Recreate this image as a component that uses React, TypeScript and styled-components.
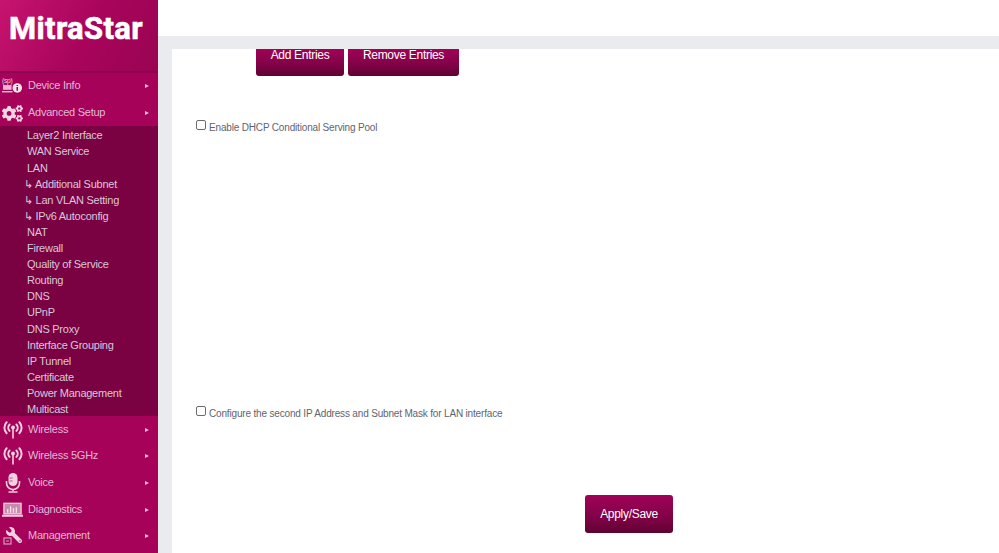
import React from 'react';
import styled, { createGlobalStyle } from 'styled-components';
import { FaCogs, FaWrench } from 'react-icons/fa';

const GlobalStyle = createGlobalStyle`
  html, body {
    margin: 0;
    padding: 0;
    background: #fff;
    font-family: "Liberation Sans", Arial, sans-serif;
    overflow: hidden;
  }
`;

const Page = styled.div`
  display: grid;
  grid-template-columns: 158px 1fr;
  width: 999px;
  height: 553px;
  overflow: hidden;
`;

const Sidebar = styled.aside`
  display: flex;
  flex-direction: column;
  background: #a6025a;
  overflow: hidden;
`;

const LogoBar = styled.div`
  height: 73px;
  flex: none;
  box-sizing: border-box;
  padding: 9px 0 0 9px;
  background: linear-gradient(120deg, #c6146f 0%, #a8045b 55%, #9a0453 100%);
  border-bottom: 2px solid #8f0350;
`;

const LogoText = styled.div`
  color: #fff;
  font-family: Roboto, sans-serif;
  font-weight: 700;
  font-size: 31px;
  line-height: 40px;
  letter-spacing: 0.35px;
  -webkit-text-stroke: 0.6px #fff;
`;

const MenuRow = styled.div`
  display: flex;
  align-items: center;
  height: 26.7px;
  flex: none;
  padding: 0 9px 0 2px;
  color: #e2b8d6;
  font-size: 11px;
  letter-spacing: -0.25px;
`;

const IconSlot = styled.span`
  width: 21px;
  margin-right: 5px;
  flex: none;
  display: flex;
  justify-content: center;
  align-items: center;
`;

const MenuLabel = styled.span`
  flex: 1;
  position: relative;
  top: -1px;
`;

const Arrow = styled.span`
  width: 0;
  height: 0;
  border-left: 4px solid #e6bcd8;
  border-top: 2.5px solid transparent;
  border-bottom: 2.5px solid transparent;
`;

const SubMenu = styled.div`
  display: flex;
  flex-direction: column;
  flex: none;
  padding: 1px 0 0;
  height: 290px;
  background: #7a0242;
  box-sizing: border-box;
`;

const SubItem = styled.div<{ $nested?: boolean }>`
  height: 16.1px;
  line-height: 16.1px;
  flex: none;
  padding-left: ${p => (p.$nested ? '24px' : '27px')};
  color: #d9c6da;
  font-size: 11px;
  letter-spacing: -0.25px;
  white-space: nowrap;
`;

const Main = styled.main`
  display: flex;
  flex-direction: column;
  min-width: 0;
`;

const TopBar = styled.div`
  height: 36px;
  flex: none;
  background: #fff;
`;

const Frame = styled.div`
  flex: 1;
  display: flex;
  background: #e9ebef;
  padding: 13px 0 0 14px;
  min-height: 0;
`;

const Panel = styled.div`
  flex: 1;
  display: flex;
  flex-direction: column;
  background: #fff;
`;

const ButtonRow = styled.div`
  display: flex;
  gap: 4px;
  padding-left: 84px;
`;

const ClippedButton = styled.button<{ $w: number }>`
  width: ${p => p.$w}px;
  height: 27px;
  border: 0;
  padding: 0 0 15px;
  border-radius: 0 0 3px 3px;
  background: linear-gradient(180deg, #a00258 0%, #7d0244 65%, #5e0232 100%);
  color: #fff;
  font-family: "Liberation Sans", Arial, sans-serif;
  font-size: 12px;
  letter-spacing: -0.3px;
  line-height: 12px;
`;

const CheckRow = styled.label<{ $top: number }>`
  display: flex;
  align-items: flex-start;
  gap: 3px;
  margin: ${p => p.$top}px 0 0 24px;
  color: #5f6470;
  font-size: 10px;
  letter-spacing: -0.17px;
  line-height: 13px;
`;

const Check = styled.input`
  appearance: none;
  width: 10px;
  height: 10px;
  margin: -1px 0 0;
  flex: none;
  border: 1px solid #6b6b6b;
  border-radius: 2px;
  background: #fff;
`;

const SaveRow = styled.div`
  display: flex;
  justify-content: flex-start;
  margin: 75px 0 0 413px;
`;

const SaveButton = styled.button`
  width: 88px;
  height: 38px;
  border: 0;
  border-radius: 3px;
  background: linear-gradient(180deg, #a00258 0%, #7d0244 65%, #5e0232 100%);
  color: #fff;
  font-family: "Liberation Sans", Arial, sans-serif;
  font-size: 12px;
  letter-spacing: -0.3px;
`;

const InfoIcon = () => (
  <svg width="22" height="18" viewBox="0 0 22 18" fill="none">
    <text x="0" y="6" fontSize="7" fontFamily="Liberation Sans" fill="#f2d0e0">(sp)</text>
    <rect x="1" y="8" width="9" height="5" fill="#eab8d0" />
    <path d="M0 15h11" stroke="#f2d0e0" strokeWidth="1.4" />
    <circle cx="16" cy="11" r="5" fill="#f2e2ec" />
    <path d="M16 8v1M16 10v4" stroke="#8b0a50" strokeWidth="1.6" />
  </svg>
);

const WifiIcon = () => (
  <svg width="20" height="18" viewBox="0 0 20 18" fill="none" stroke="#f2d0e0" strokeWidth="2" strokeLinecap="round">
    <circle cx="10" cy="6.5" r="2" fill="#f2d0e0" stroke="none" />
    <path d="M10 8v9" strokeWidth="1.6" />
    <path d="M6.6 3.5a4.6 4.6 0 0 0 0 6.4M13.4 3.5a4.6 4.6 0 0 1 0 6.4" />
    <path d="M3.6 1.2a8 8 0 0 0 0 11M16.4 1.2a8 8 0 0 1 0 11" />
  </svg>
);

const MicIcon = () => (
  <svg width="16" height="20" viewBox="0 0 16 20" fill="none">
    <rect x="3.5" y="0" width="9" height="13" rx="4.5" fill="#f2d0e0" />
    <path d="M1.5 8v2a6.5 6.5 0 0 0 13 0V8" stroke="#f2d0e0" strokeWidth="1.6" />
    <path d="M8 16v2M3.5 19h9" stroke="#f2d0e0" strokeWidth="1.6" />
    <path d="M4.5 5h3M4.5 8h3" stroke="#b0587f" />
  </svg>
);

const ScreenIcon = () => (
  <svg width="21" height="16" viewBox="0 0 22 16" fill="none">
    <rect x="2" y="1" width="18" height="11" fill="#c98aac" stroke="#f2d0e0" strokeWidth="1.4" />
    <path d="M6 11V7M9 11V4M12 11V6M15 11V5" stroke="#f6e2ec" strokeWidth="1.4" />
    <path d="M0 14h22" stroke="#f2d0e0" strokeWidth="2.2" />
  </svg>
);

const ToolIcon = () => (
  <svg width="20" height="18" viewBox="0 0 20 18" fill="none">
    <rect x="1" y="11" width="7" height="6" stroke="#d89abb" strokeWidth="1.2" />
    <path d="M3 14h3" stroke="#d89abb" />
    <foreignObject x="3" y="0" width="17" height="17">
      <FaWrench size={16} color="#f2d0e0" style={{ transform: 'scaleX(-1)' }} />
    </foreignObject>
  </svg>
);

const subItems: [string, boolean?][] = [
  ['Layer2 Interface'],
  ['WAN Service'],
  ['LAN'],
  ['↳ Additional Subnet', true],
  ['↳ Lan VLAN Setting', true],
  ['↳ IPv6 Autoconfig', true],
  ['NAT'],
  ['Firewall'],
  ['Quality of Service'],
  ['Routing'],
  ['DNS'],
  ['UPnP'],
  ['DNS Proxy'],
  ['Interface Grouping'],
  ['IP Tunnel'],
  ['Certificate'],
  ['Power Management'],
  ['Multicast'],
];

const Row = ({ icon, label }: { icon: React.ReactNode; label: string }) => (
  <MenuRow>
    <IconSlot>{icon}</IconSlot>
    <MenuLabel>{label}</MenuLabel>
    <Arrow />
  </MenuRow>
);

export default function App() {
  return (
    <Page>
      <GlobalStyle />
      <Sidebar>
        <LogoBar>
          <LogoText>MitraStar</LogoText>
        </LogoBar>
        <Row icon={<InfoIcon />} label="Device Info" />
        <Row icon={<FaCogs size={21} color="#efd6e2" />} label="Advanced Setup" />
        <SubMenu>
          {subItems.map(([text, nested]) => (
            <SubItem key={text} $nested={nested}>{text}</SubItem>
          ))}
        </SubMenu>
        <Row icon={<WifiIcon />} label="Wireless" />
        <Row icon={<WifiIcon />} label="Wireless 5GHz" />
        <Row icon={<MicIcon />} label="Voice" />
        <Row icon={<ScreenIcon />} label="Diagnostics" />
        <Row icon={<ToolIcon />} label="Management" />
      </Sidebar>
      <Main>
        <TopBar />
        <Frame>
          <Panel>
            <ButtonRow>
              <ClippedButton $w={88}>Add Entries</ClippedButton>
              <ClippedButton $w={111}>Remove Entries</ClippedButton>
            </ButtonRow>
            <CheckRow $top={45}>
              <Check type="checkbox" />
              Enable DHCP Conditional Serving Pool
            </CheckRow>
            <CheckRow $top={273}>
              <Check type="checkbox" />
              Configure the second IP Address and Subnet Mask for LAN interface
            </CheckRow>
            <SaveRow>
              <SaveButton>Apply/Save</SaveButton>
            </SaveRow>
          </Panel>
        </Frame>
      </Main>
    </Page>
  );
}
